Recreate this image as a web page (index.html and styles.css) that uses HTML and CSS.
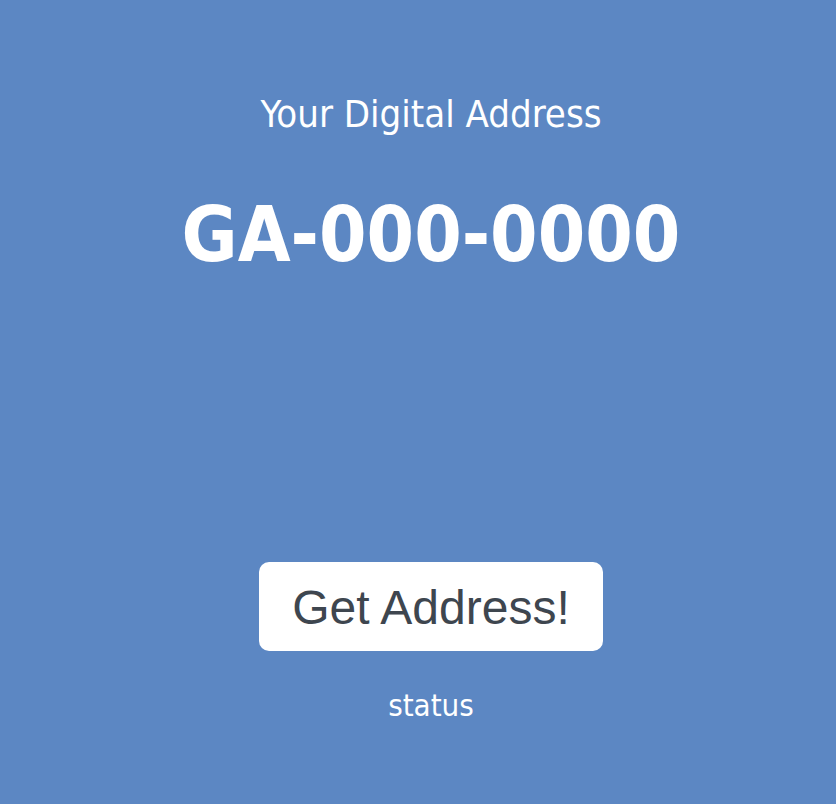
FILE: index.html
```html
<!DOCTYPE html>
<html>
<head>
<meta charset="utf-8">
<link rel="stylesheet" href="styles.css">
</head>
<body>
<main class="page">
  <h2 class="label">Your Digital Address</h2>
  <h1 class="address">GA-000-0000</h1>
  <button class="get-btn">Get Address!</button>
  <p class="status">status</p>
</main>
</body>
</html>
```
FILE: styles.css
```css
html, body {
  margin: 0;
  padding: 0;
  background: #5c87c3;
  height: 100%;
}
.page {
  display: flex;
  flex-direction: column;
  align-items: center;
  font-family: "DejaVu Sans Condensed", "DejaVu Sans", sans-serif;
  color: #ffffff;
  padding: 92px 0 0 26px;
}
.label {
  margin: 0;
  font-weight: normal;
  font-size: 38px;
  line-height: 44px;
}
.address {
  margin: 54px 0 0 0;
  font-weight: bold;
  font-size: 76px;
  line-height: 90px;
}
.get-btn {
  margin-top: 282px;
  width: 344px;
  height: 89px;
  border: none;
  border-radius: 10px;
  background: #ffffff;
  color: #3e464f;
  font-family: "Liberation Sans", Arial, sans-serif;
  font-size: 48px;
  padding: 2px 0 0 0;
}
.status {
  margin: 36px 0 0 0;
  font-size: 31px;
  line-height: 36px;
}
```
